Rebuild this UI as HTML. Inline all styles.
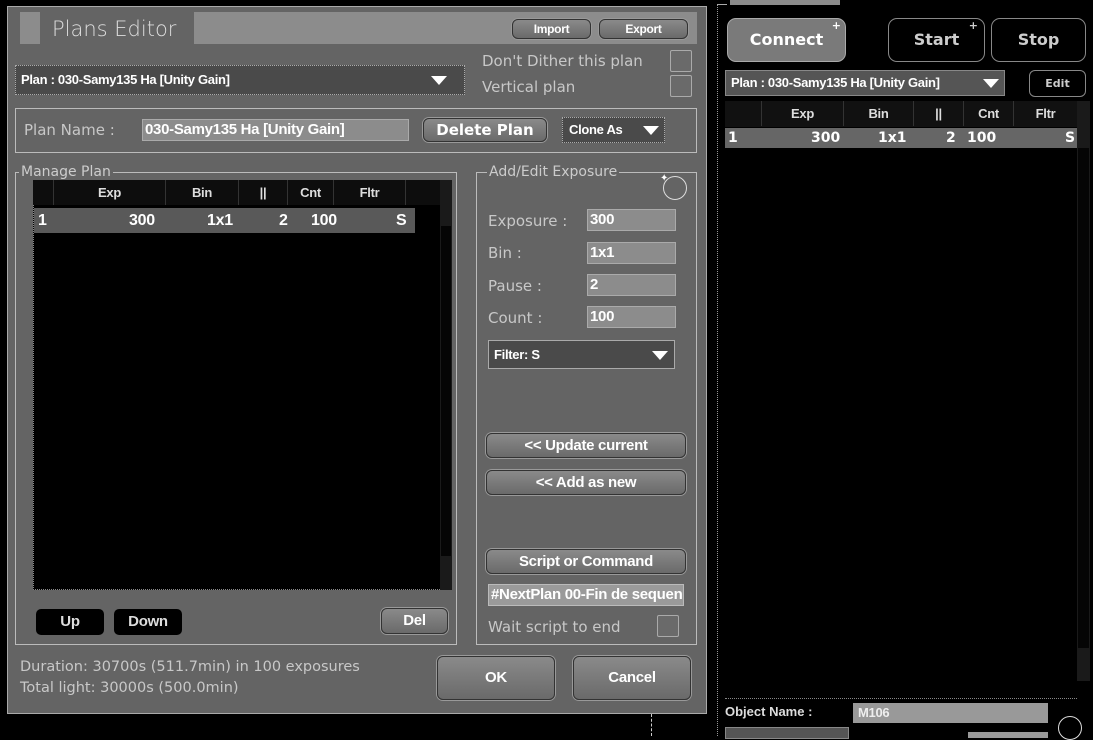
<!DOCTYPE html>
<html><head><meta charset="utf-8"><style>
*{margin:0;padding:0;box-sizing:border-box}
body{width:1093px;height:736px;background:#000;position:relative;overflow:hidden;font-family:"DejaVu Sans","Liberation Sans",sans-serif}
.a{position:absolute}
.n{font-family:"Liberation Sans Narrow","Liberation Sans",sans-serif;font-weight:bold;letter-spacing:-0.3px}
.lbl{color:#c8c8c8;font-size:14px}
.inp{background:#8c8c8c;border:1px solid #aaa;color:#fff;font-size:15px;padding-left:2px;line-height:20px}
.btn{background:linear-gradient(#8a8a8a,#6a6a6a);border:1px solid #333;box-shadow:0 0 0 1px #999;border-radius:6px;color:#fff;text-align:center}
.sel{background:#4a4a4a;border:1px dotted #aaa;color:#fff}
.tri{position:absolute;width:0;height:0;border-left:8px solid transparent;border-right:8px solid transparent;border-top:9px solid #fff}
.grp{border:1px solid #bbb}
.leg{background:#646464;color:#ccc;font-size:14px;padding:0 2px;top:-10px;line-height:18px}
.hdr{background:#0d0d0d;color:#ddd;font-size:13px}
.hdr span{position:absolute;top:0;line-height:25px;border-left:1px solid #333;text-align:center;height:25px}
.chk{border:1px solid #aaa;background:#6a6a6a;border-radius:2px}
</style></head><body>
<div class="a" style="left:7px;top:6px;width:700px;height:708px;background:#646464;border:1px solid #aaa"></div>
<div class="a" style="left:20px;top:12px;width:20px;height:32px;background:#8c8c8c"></div>
<div class="a" style="left:52px;top:15px;color:#ddd;font-size:21px;line-height:28px;font-family:'DejaVu Sans',sans-serif;font-weight:300">Plans Editor</div>
<div class="a" style="left:194px;top:12px;width:503px;height:32px;background:#8c8c8c"></div>
<div class="a btn n" style="left:512px;top:19px;width:79px;height:20px;font-size:12px;line-height:18px">Import</div>
<div class="a btn n" style="left:599px;top:19px;width:89px;height:20px;font-size:12px;line-height:18px">Export</div>

<div class="a sel n" style="left:15px;top:65px;width:450px;height:30px;font-size:13px;line-height:28px;padding-left:5px">Plan : 030-Samy135 Ha [Unity Gain]<div class="tri" style="left:415px;top:10px"></div></div>
<div class="a lbl" style="left:482px;top:52px;font-size:15px">Don't Dither this plan</div>
<div class="a lbl" style="left:482px;top:78px;font-size:15px">Vertical plan</div>
<div class="a chk" style="left:670px;top:50px;width:22px;height:22px"></div>
<div class="a chk" style="left:670px;top:75px;width:22px;height:22px"></div>

<div class="a grp" style="left:15px;top:108px;width:682px;height:45px"></div>
<div class="a lbl" style="left:24px;top:121px;font-size:15px">Plan Name :</div>
<div class="a inp n" style="left:142px;top:119px;width:267px;height:22px;font-size:15px">030-Samy135 Ha [Unity Gain]</div>
<div class="a btn" style="left:423px;top:118px;width:124px;height:24px;font-weight:bold;font-size:15px;line-height:22px">Delete Plan</div>
<div class="a sel n" style="left:562px;top:117px;width:103px;height:26px;font-size:13px;line-height:24px;padding-left:6px">Clone As<div class="tri" style="left:80px;top:8px"></div></div>

<div class="a grp" style="left:15px;top:172px;width:442px;height:473px"><div class="a leg" style="left:3px">Manage Plan</div></div>
<div class="a" style="left:33px;top:180px;width:407px;height:410px;background:#000;border-left:1px dotted #888;border-bottom:1px dotted #888"></div>
<div class="a hdr n" style="left:33px;top:180px;width:407px;height:25px">
<span style="left:20px;width:112px">Exp</span><span style="left:132px;width:73px">Bin</span><span style="left:205px;width:49px">||</span><span style="left:254px;width:46px">Cnt</span><span style="left:300px;width:72px">Fltr</span><span style="left:372px;width:35px"></span></div>
<div class="a" style="left:440px;top:180px;width:12px;height:410px;background:#1a1a1a"></div>
<div class="a" style="left:441px;top:226px;width:10px;height:330px;background:#050505"></div>
<div class="a n" style="left:34px;top:208px;width:381px;height:25px;background:#595959;color:#fff;font-size:16px;line-height:25px">
<span class="a" style="left:4px">1</span><span class="a" style="left:95px">300</span><span class="a" style="left:173px">1x1</span><span class="a" style="left:245px">2</span><span class="a" style="left:277px">100</span><span class="a" style="left:362px">S</span></div>
<div class="a n" style="left:36px;top:609px;width:68px;height:26px;background:#000;border-radius:5px;color:#ddd;font-size:15px;text-align:center;line-height:26px">Up</div>
<div class="a n" style="left:114px;top:609px;width:68px;height:26px;background:#000;border-radius:5px;color:#ddd;font-size:15px;text-align:center;line-height:26px">Down</div>
<div class="a btn n" style="left:381px;top:608px;width:67px;height:26px;font-size:15px;line-height:24px">Del</div>

<div class="a grp" style="left:476px;top:172px;width:221px;height:473px"><div class="a leg" style="left:10px">Add/Edit Exposure</div></div>
<div class="a" style="left:663px;top:176px;width:24px;height:24px;border:1px solid #ddd;border-radius:50%"></div>
<div class="a" style="left:660px;top:173px;color:#fff;font-size:10px">✦</div>
<div class="a lbl" style="left:488px;top:212px;font-size:15px">Exposure :</div>
<div class="a lbl" style="left:488px;top:244px;font-size:15px">Bin :</div>
<div class="a lbl" style="left:488px;top:277px;font-size:15px">Pause :</div>
<div class="a lbl" style="left:488px;top:309px;font-size:15px">Count :</div>
<div class="a inp n" style="left:587px;top:209px;width:89px;height:22px">300</div>
<div class="a inp n" style="left:587px;top:242px;width:89px;height:22px">1x1</div>
<div class="a inp n" style="left:587px;top:274px;width:89px;height:22px">2</div>
<div class="a inp n" style="left:587px;top:306px;width:89px;height:22px">100</div>
<div class="a sel n" style="left:488px;top:340px;width:187px;height:29px;font-size:13px;line-height:27px;padding-left:5px;border-style:solid">Filter: S<div class="tri" style="left:163px;top:10px"></div></div>
<div class="a btn n" style="left:486px;top:433px;width:200px;height:25px;font-size:15px;line-height:23px">&lt;&lt; Update current</div>
<div class="a btn n" style="left:486px;top:470px;width:200px;height:25px;font-size:15px;line-height:23px">&lt;&lt; Add as new</div>
<div class="a btn n" style="left:486px;top:549px;width:200px;height:25px;font-size:15px;line-height:23px">Script or Command</div>
<div class="a n" style="left:488px;top:584px;width:196px;height:22px;background:#9a9a9a;border:1px solid #bbb;color:#fff;font-size:15px;line-height:20px;padding-left:2px;overflow:hidden;white-space:nowrap">#NextPlan 00-Fin de sequence</div>
<div class="a lbl" style="left:488px;top:618px;font-size:15px">Wait script to end</div>
<div class="a chk" style="left:657px;top:615px;width:22px;height:22px"></div>

<div class="a lbl" style="left:20px;top:657px;font-size:14.5px;line-height:21px">Duration: 30700s (511.7min) in 100 exposures<br>Total light: 30000s (500.0min)</div>
<div class="a btn n" style="left:437px;top:656px;width:118px;height:44px;font-size:15px;line-height:42px">OK</div>
<div class="a btn n" style="left:573px;top:656px;width:118px;height:44px;font-size:15px;line-height:42px">Cancel</div>
<div class="a" style="left:651px;top:714px;height:22px;border-left:1px dashed #ccc"></div>

<div class="a" style="left:730px;top:0;width:110px;height:5px;background:#8c8c8c"></div>
<div class="a" style="left:717px;top:4px;width:376px;height:732px;border-left:1px dotted #999"></div>
<div class="a" style="left:717px;top:4px;width:10px;border-top:1px solid #aaa"></div>
<div class="a" style="left:727px;top:18px;width:119px;height:44px;background:#7a7a7a;border:1px solid #aaa;border-radius:9px;color:#fff;font-weight:bold;font-size:16px;text-align:center;line-height:42px">Connect<span class="a" style="right:4px;top:-14px;font-size:11px">+</span></div>
<div class="a" style="left:888px;top:18px;width:97px;height:44px;background:#000;border:1px solid #888;border-radius:9px;color:#ccc;font-weight:bold;font-size:16px;text-align:center;line-height:42px">Start<span class="a" style="right:6px;top:-14px;font-size:11px">+</span></div>
<div class="a" style="left:991px;top:18px;width:95px;height:44px;background:#000;border:1px solid #888;border-radius:9px;color:#ccc;font-weight:bold;font-size:16px;text-align:center;line-height:42px">Stop</div>
<div class="a n" style="left:725px;top:70px;width:280px;height:26px;background:#555;border:1px solid #888;color:#fff;font-size:13px;line-height:24px;padding-left:5px">Plan : 030-Samy135 Ha [Unity Gain]<div class="tri" style="left:257px;top:8px"></div></div>
<div class="a" style="left:1029px;top:70px;width:57px;height:27px;background:#000;border:1px solid #888;border-radius:6px;color:#ccc;font-weight:bold;font-size:11px;text-align:center;line-height:25px">Edit</div>
<div class="a hdr n" style="left:725px;top:101px;width:352px;height:26px;background:#111">
<span style="left:36px;width:82px">Exp</span><span style="left:118px;width:70px">Bin</span><span style="left:188px;width:50px">||</span><span style="left:238px;width:50px">Cnt</span><span style="left:288px;width:64px">Fltr</span></div>
<div class="a" style="left:1077px;top:101px;width:13px;height:580px;background:#1a1a1a"></div>
<div class="a" style="left:1078px;top:148px;width:11px;height:500px;background:#050505"></div>
<div class="a" style="left:725px;top:128px;width:352px;height:20px;background:#666;color:#fff;font-weight:bold;font-size:14px;line-height:20px">
<span class="a" style="left:3px">1</span><span class="a" style="left:86px">300</span><span class="a" style="left:153px">1x1</span><span class="a" style="left:221px">2</span><span class="a" style="left:242px">100</span><span class="a" style="left:340px">S</span></div>
<div class="a" style="left:725px;top:698px;width:352px;border-top:1px dotted #888"></div>
<div class="a" style="left:725px;top:704px;color:#ddd;font-weight:bold;font-size:13px;font-family:'Liberation Sans Narrow','Liberation Sans',sans-serif">Object Name :</div>
<div class="a n" style="left:853px;top:703px;width:195px;height:20px;background:#999;color:#eee;font-size:13px;line-height:20px;padding-left:5px">M106</div>
<div class="a" style="left:1058px;top:716px;width:24px;height:24px;border:1px solid #ddd;border-radius:50%"></div>
<div class="a" style="left:725px;top:727px;width:124px;height:12px;background:#555;border:1px solid #888"></div>
<div class="a" style="left:968px;top:732px;width:80px;height:6px;background:#999"></div>
</body></html>
